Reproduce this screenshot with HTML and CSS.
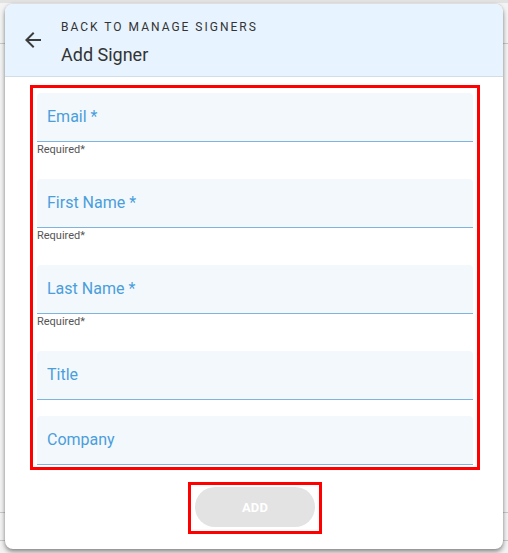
FILE: index.html
```html
<!DOCTYPE html>
<html lang="en">
<head>
  <meta charset="UTF-8" />
  <title>Add Signer</title>
  <link rel="stylesheet" href="styles.css">
</head>
<body>
  <div class="dialog">
    <div class="dialog-header">
      <svg class="back-icon" width="24" height="24" viewBox="0 0 24 24">
        <path d="M20 11H7.83l5.59-5.59L12 4l-8 8 8 8 1.41-1.41L7.83 13H20v-2z" fill="#3c3c3c"/>
      </svg>
      <div class="header-text">
        <div class="overline">Back to Manage Signers</div>
        <div class="title">Add Signer</div>
      </div>
    </div>

    <form class="signer-form">
      <div class="field"><label>Email *</label></div>
      <div class="helper">Required*</div>

      <div class="field"><label>First Name *</label></div>
      <div class="helper">Required*</div>

      <div class="field"><label>Last Name *</label></div>
      <div class="helper">Required*</div>

      <div class="field"><label>Title</label></div>

      <div class="field"><label>Company</label></div>
    </form>

    <div class="actions">
      <div class="add-wrap">
        <button class="add-btn" type="button" disabled>ADD</button>
      </div>
    </div>
  </div>
</body>
</html>
```

FILE: styles.css
```css
body {
  margin: 0;
  height: 553px;
  padding: 4px 5px 0 5px;
  box-sizing: border-box;
  font-family: Roboto, 'Noto Sans', sans-serif;
  background-color: #f3f3f3;
  background-image:
    linear-gradient(#e2e2e2, #e2e2e2),
    linear-gradient(#c9c9c9, #c9c9c9),
    linear-gradient(#c9c9c9, #c9c9c9),
    linear-gradient(#c9c9c9, #c9c9c9);
  background-size: 100% 3px, 100% 1px, 100% 1px, 100% 1px;
  background-position: 0 0, 0 43px, 0 512px, 0 540px;
  background-repeat: no-repeat;
  overflow: hidden;
}

.dialog {
  width: 498px;
  height: 545px;
  background: #fff;
  border-radius: 8px;
  overflow: hidden;
  box-shadow: 0 3px 5px rgba(0,0,0,0.4), 0 0 3px rgba(0,0,0,0.15);
}

.dialog-header {
  display: flex;
  align-items: center;
  height: 72px;
  padding: 0 0 0 16px;
  background: #e7f3fe;
  border-bottom: 1px solid #d3dde7;
}

.back-icon {
  flex-shrink: 0;
  margin-top: -1px;
}

.header-text {
  margin-left: 16px;
  margin-top: 6px;
  color: #333;
}

.overline {
  font-size: 12px;
  line-height: 16px;
  letter-spacing: 2px;
  text-transform: uppercase;
}

.title {
  font-size: 18px;
  line-height: 24px;
  margin-top: 8px;
}

.signer-form {
  margin: 8px 23px 0 25px;
  border: 3px solid #ff0000;
  padding: 5px 4px 2px 4px;
}

.field {
  height: 48px;
  display: flex;
  align-items: center;
  padding-left: 10px;
  background: #f3f8fd;
  border-radius: 4px 4px 0 0;
  border-bottom: 1px solid #7fb4de;
}

.field label {
  font-size: 16px;
  line-height: 20px;
  color: #4a9edb;
}

.helper {
  font-size: 11px;
  line-height: 15px;
  color: #555;
  margin-bottom: 22px;
}

.field + .field {
  margin-top: 16px;
}

.actions {
  display: flex;
  justify-content: center;
  margin-top: 12px;
  padding-left: 2px;
}

.add-wrap {
  border: 3px solid #ff0000;
  padding: 2px 4px 4px 4px;
}

.add-btn {
  width: 120px;
  height: 40px;
  border: none;
  border-radius: 20px;
  background: #e3e3e3;
  color: #fff;
  font-family: Roboto, sans-serif;
  font-weight: bold;
  font-size: 13px;
  letter-spacing: 0.2px;
}
```
